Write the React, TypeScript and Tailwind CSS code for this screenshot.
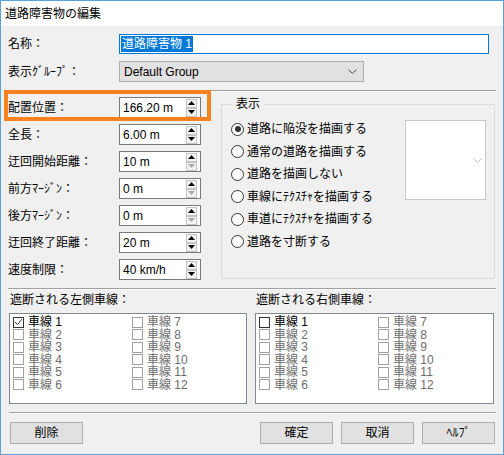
import React from "react";

const FONT = "font-['Liberation_Sans','Noto_Sans_CJK_JP',sans-serif]";

function Arrow({ up, disabled }: { up?: boolean; disabled?: boolean }) {
  return (
    <div className="flex h-[9px] w-[11px] items-center justify-center border border-[#c4c4c4] bg-[#f3f3f3]">
      <svg width="7" height="4" viewBox="0 0 7 4">
        <path
          d={up ? "M3.5 0L7 4H0Z" : "M0 0H7L3.5 4Z"}
          fill={disabled ? "#a8a8a8" : "#000"}
        />
      </svg>
    </div>
  );
}

function SpinField({
  label,
  value,
  downDisabled,
  highlight,
}: {
  label: string;
  value: string;
  downDisabled?: boolean;
  highlight?: boolean;
}) {
  return (
    <div className="relative flex h-[27px] items-center">
      <div className="w-[111px] text-[12px] leading-none">{label}</div>
      <div className="flex h-[21px] w-[82px] items-center border border-[#7a7a7a] bg-white pl-[3px]">
        <span className="text-[12px] leading-none">{value}</span>
        <div className="ml-auto mr-[3px] flex flex-col">
          <Arrow up />
          <Arrow disabled={downDisabled} />
        </div>
      </div>
      {highlight && (
        <div className="absolute left-[-4px] top-[-4px] h-[31px] w-[207px] border-[4px] border-[#f5821f]" />
      )}
    </div>
  );
}

function Radio({ label, checked }: { label: string; checked?: boolean }) {
  return (
    <div className="flex h-[22.5px] items-center gap-[3px]">
      <div className="flex h-[13px] w-[13px] items-center justify-center rounded-full border border-[#333] bg-white">
        {checked && <div className="h-[6px] w-[6px] rounded-full bg-[#333]" />}
      </div>
      <span className="text-[12px] leading-none">{label}</span>
    </div>
  );
}

function Check({ n, enabled, checked }: { n: number; enabled?: boolean; checked?: boolean }) {
  return (
    <div className="flex items-center gap-[4px]">
      <div
        className={`flex h-[11px] w-[11px] items-center justify-center border bg-white ${
          enabled ? "border-[#333]" : "border-[#a0a0a0]"
        }`}
      >
        {checked && (
          <svg width="9" height="8" viewBox="0 0 9 8">
            <path d="M1 4L3.5 6.5L8 1" fill="none" stroke="#333" strokeWidth="1" />
          </svg>
        )}
      </div>
      <span
        className={`text-[12px] leading-none ${enabled ? "text-black" : "text-[#6d6d6d]"}`}
      >
        車線 {n}
      </span>
    </div>
  );
}

function LaneList({ width, checkedFirst }: { width: string; checkedFirst?: boolean }) {
  const items = Array.from({ length: 12 }, (_, i) => i + 1);
  return (
    <div className={`h-[91px] ${width} border border-[#828790] bg-white pl-[3px] pt-[2px]`}>
      <div className="grid grid-flow-col grid-cols-[119px_119px] grid-rows-[repeat(6,12.5px)]">
        {items.map((n) => (
          <Check key={n} n={n} enabled={n === 1} checked={checkedFirst && n === 1} />
        ))}
      </div>
    </div>
  );
}

function Btn({ children }: { children: React.ReactNode }) {
  return (
    <div className="flex h-[22px] w-[73px] items-center justify-center border border-[#adadad] bg-[#e1e1e1] text-[12px] leading-none">
      {children}
    </div>
  );
}

function Sep() {
  return <div className="h-[2px] border-t border-b border-t-[#a0a0a0] border-b-white" />;
}

export default function App() {
  return (
    <div
      className={`flex h-[455px] w-[504px] flex-col border border-[#5aa2dc] bg-[#f0f0f0] text-black ${FONT}`}
    >
      {/* title bar */}
      <div className="flex h-[25px] shrink-0 items-center bg-white pl-[4px] text-[12px] leading-none">
        道路障害物の編集
      </div>

      <div className="flex flex-col px-[7px]">
        {/* name */}
        <div className="mt-[8px] flex items-center">
          <div className="w-[111px] text-[12px] leading-none">名称：</div>
          <div className="flex h-[20px] w-[370px] items-center border border-[#0078d7] bg-white pl-[1px]">
            <span className="bg-[#0078d7] px-[1px] py-[2px] text-[12px] leading-none text-white">
              道路障害物 1
            </span>
          </div>
        </div>

        {/* group */}
        <div className="mt-[7px] flex items-center">
          <div className="w-[111px] text-[12px] leading-none">表示ｸﾞﾙｰﾌﾟ：</div>
          <div className="flex h-[21px] w-[245px] items-center border border-[#adadad] bg-[#e1e1e1] pl-[4px] pr-[6px]">
            <span className="text-[12px] leading-none">Default Group</span>
            <svg className="ml-auto" width="9" height="5" viewBox="0 0 9 5">
              <path d="M0.5 0.5L4.5 4.5L8.5 0.5" fill="none" stroke="#444" strokeWidth="1" />
            </svg>
          </div>
        </div>

        <div className="mt-[8px]">
          <Sep />
        </div>

        {/* main */}
        <div className="mt-[2px] flex">
          <div className="flex w-[193px] flex-col">
            <SpinField label="配置位置：" value="166.20 m" highlight />
            <SpinField label="全長：" value="6.00 m" />
            <SpinField label="迂回開始距離：" value="10 m" downDisabled />
            <SpinField label="前方ﾏｰｼﾞﾝ：" value="0 m" downDisabled />
            <SpinField label="後方ﾏｰｼﾞﾝ：" value="0 m" downDisabled />
            <SpinField label="迂回終了距離：" value="20 m" />
            <SpinField label="速度制限：" value="40 km/h" />
          </div>

          <fieldset className="ml-[20px] mt-[2px] h-[183px] w-[274px] border border-[#dcdcdc]">
            <legend className="ml-[10px] px-[4px] text-[12px] leading-[16px]">表示</legend>
            <div className="flex pt-[6px]">
              <div className="flex flex-1 flex-col pl-[9px]">
                <Radio label="道路に陥没を描画する" checked />
                <Radio label="通常の道路を描画する" />
                <Radio label="道路を描画しない" />
                <Radio label="車線にﾃｸｽﾁｬを描画する" />
                <Radio label="車道にﾃｸｽﾁｬを描画する" />
                <Radio label="道路を寸断する" />
              </div>
              <div className="mr-[8px] mt-[2px] flex h-[80px] w-[81px] items-center justify-end border border-[#c8c8c8] bg-white pr-[3px]">
                <svg width="9" height="5" viewBox="0 0 9 5">
                  <path d="M0.5 0.5L4.5 4.5L8.5 0.5" fill="none" stroke="#c0c0c0" strokeWidth="1" />
                </svg>
              </div>
            </div>
          </fieldset>
        </div>

        <div className="mt-[5px]">
          <Sep />
        </div>

        {/* lane lists */}
        <div className="mt-[2px] flex gap-[8px] pl-[1px]">
          <div className="flex flex-col">
            <div className="h-[16px] pl-[1px] text-[12px] leading-[16px]">遮断される左側車線：</div>
            <div className="mt-[5px]">
              <LaneList width="w-[238px]" checkedFirst />
            </div>
          </div>
          <div className="flex flex-col">
            <div className="h-[16px] pl-[1px] text-[12px] leading-[16px]">遮断される右側車線：</div>
            <div className="mt-[5px]">
              <LaneList width="w-[239px]" />
            </div>
          </div>
        </div>

        <div className="mt-[8px] pl-[1px]">
          <Sep />
        </div>

        {/* buttons */}
        <div className="mt-[8px] flex gap-[8px] pl-[2px] pr-[1px]">
          <Btn>削除</Btn>
          <div className="ml-auto" />
          <Btn>確定</Btn>
          <Btn>取消</Btn>
          <Btn>ﾍﾙﾌﾟ</Btn>
        </div>
      </div>
    </div>
  );
}
